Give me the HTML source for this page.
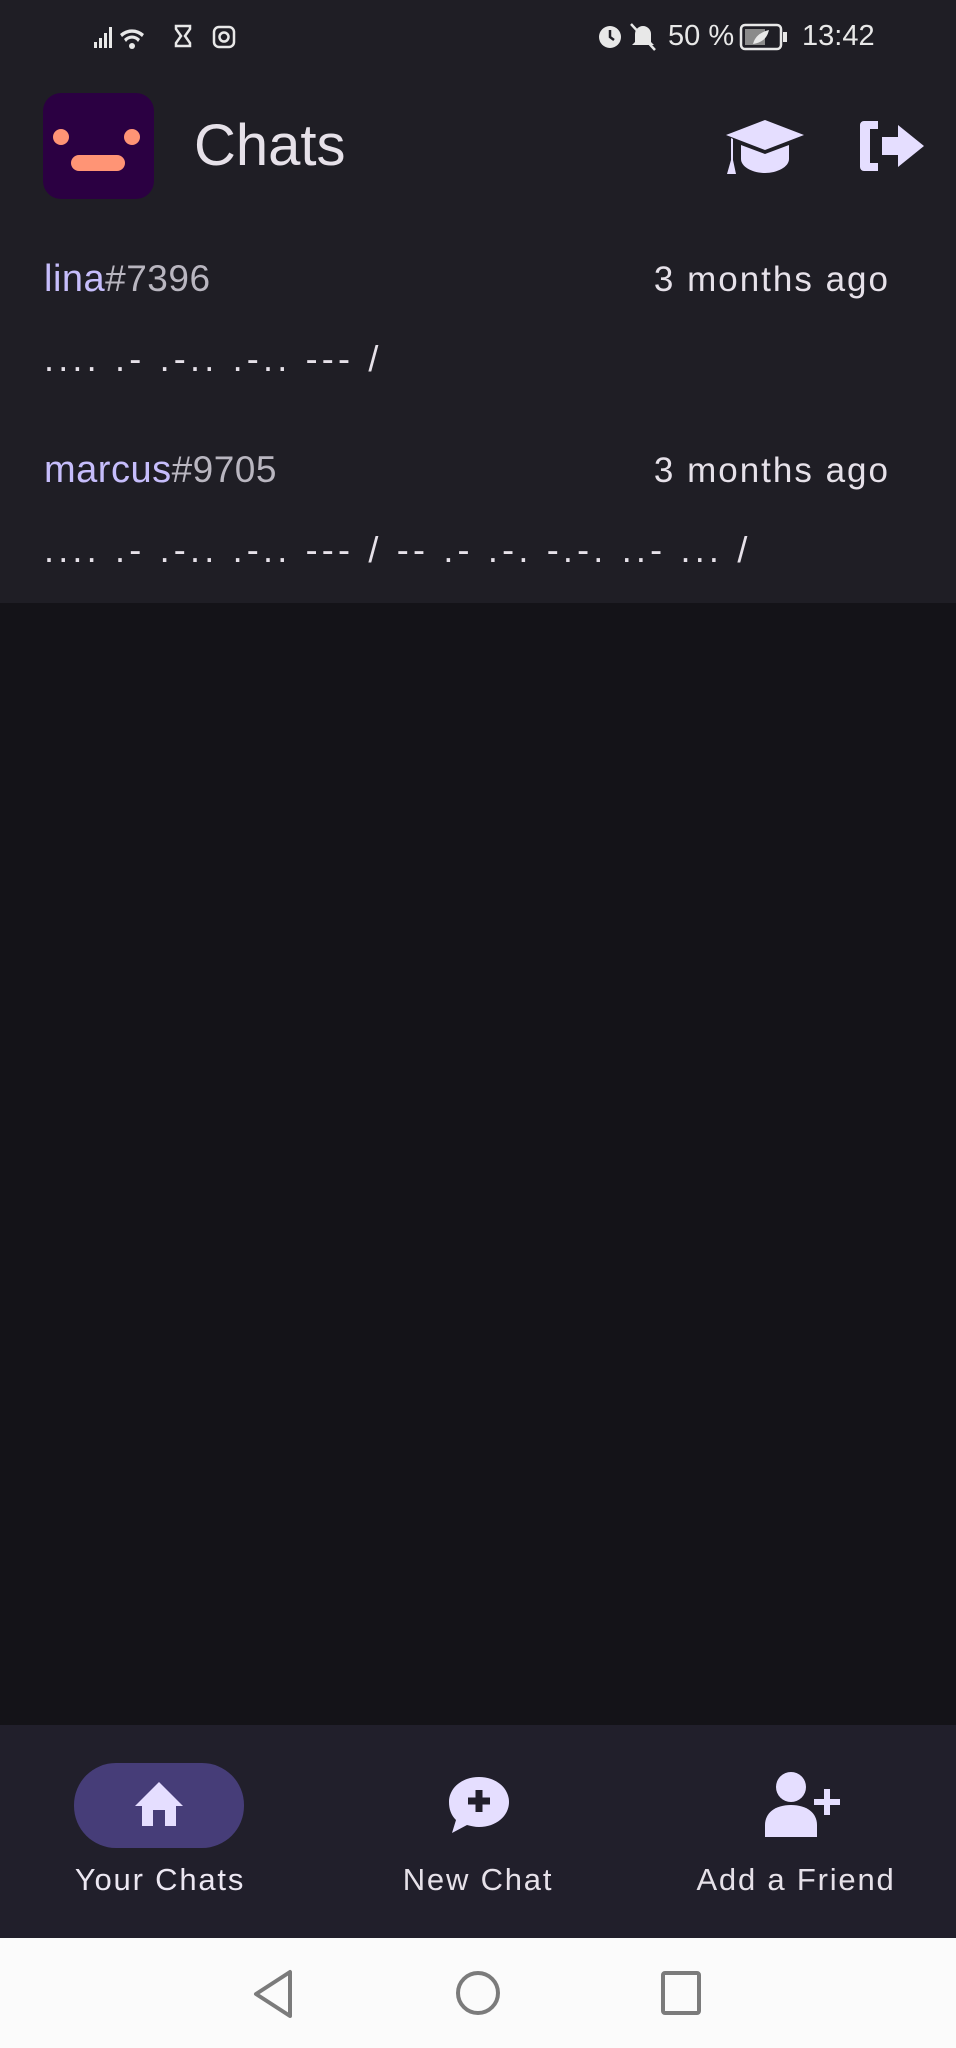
<!DOCTYPE html>
<html><head><meta charset="utf-8"><style>
*{margin:0;padding:0;box-sizing:border-box}
body{width:956px;height:2048px;background:#141318;font-family:"Liberation Sans",sans-serif;position:relative;overflow:hidden;color:#e6e1e9}
.top{position:absolute;left:0;top:0;width:956px;height:603px;background:#1f1e25}
.abs{position:absolute}
.st{font-size:29px;color:#e8e8e8;top:20px}
.name{font-size:38px;left:44px;letter-spacing:0.5px}
.name b{font-weight:normal;color:#c6bdfb}
.name span{color:#b9b6c0;font-size:37px}
.time{font-size:35px;right:66px;color:#e6e1e9;letter-spacing:2px}
.morse{font-size:36px;left:44px;color:#e6e1e9;letter-spacing:4.2px}
.nav{position:absolute;left:0;top:1725px;width:956px;height:213px;background:#211f2b}
.lbl{position:absolute;top:1862px;font-size:31px;color:#e6e1e9;transform:translateX(-50%);white-space:nowrap;letter-spacing:1.8px}
.sys{position:absolute;left:0;top:1938px;width:956px;height:110px;background:#fbfbfb}
</style></head><body>
<div class="top"></div>
<svg class="abs" style="left:92px;top:22px" width="160" height="30" viewBox="0 0 160 30" fill="#e8e8e8">
<rect x="2" y="20" width="3" height="6"/><rect x="7" y="16" width="3" height="10"/><rect x="12" y="11" width="3" height="15"/><rect x="17" y="5" width="3" height="21"/>
<path d="M28 12a18 18 0 0 1 24 0l-2 3a14 14 0 0 0-20 0z M32 17a11 11 0 0 1 16 0l-2 3a7 7 0 0 0-12 0z"/><circle cx="40" cy="24" r="3"/>
<path d="M84 4h14v3l-5 7 5 7v3H84v-3l5-7-5-7z" fill="none" stroke="#e8e8e8" stroke-width="2.5"/>
<rect x="122" y="5" width="20" height="20" rx="5" fill="none" stroke="#e8e8e8" stroke-width="2.5"/><circle cx="132" cy="15" r="4.5" fill="none" stroke="#e8e8e8" stroke-width="2.5"/>
</svg>
<svg class="abs" style="left:595px;top:20px" width="70" height="34" viewBox="0 0 70 34" fill="#e8e8e8">
<circle cx="15" cy="17" r="11"/><path d="M15 10v7l4 3" stroke="#1f1e25" stroke-width="2.5" fill="none"/>
<path d="M48 6a8 8 0 0 1 8 8v8l3 3H37l3-3v-8a8 8 0 0 1 8-8z"/><path d="M36 4l24 26" stroke="#e8e8e8" stroke-width="2.5"/>
</svg>
<div class="abs st" style="left:668px">50 %</div>
<svg class="abs" style="left:739px;top:22px" width="50" height="30" viewBox="0 0 50 30"><rect x="2" y="3" width="40" height="24" rx="4" fill="none" stroke="#e8e8e8" stroke-width="2.5"/><rect x="44" y="10" width="4" height="10" fill="#e8e8e8"/><rect x="6" y="7" width="20" height="16" fill="#8a8a8a"/><path d="M14 22c2-8 8-12 16-14-2 8-6 12-16 14z" fill="#e8e8e8"/></svg>
<div class="abs st" style="left:802px">13:42</div>
<div class="abs" style="left:43px;top:93px;width:111px;height:106px;background:#2b0042;border-radius:18px"></div>
<div class="abs" style="left:53px;top:129px;width:16px;height:16px;border-radius:50%;background:#ff9475"></div>
<div class="abs" style="left:124px;top:129px;width:16px;height:16px;border-radius:50%;background:#ff9475"></div>
<div class="abs" style="left:71px;top:155px;width:54px;height:16px;border-radius:8px;background:#ff9475"></div>
<div class="abs" style="left:194px;top:112px;font-size:58px;color:#e6e1e9;line-height:68px">Chats</div>
<svg class="abs" style="left:724px;top:118px" width="82" height="58" viewBox="0 0 82 58" fill="#e5deff">
<path d="M41 2L80 17 41 32 2 17z"/><path d="M17 27v14c0 8 12 14 24 14s24-6 24-14V27L41 36z"/><path d="M7 20v22l-4 14h9l-3-14V21z"/>
</svg>
<svg class="abs" style="left:858px;top:117px" width="68" height="58" viewBox="0 0 68 58" fill="#e5deff">
<path d="M6 4h14v8H12v34h8v8H6a4 4 0 0 1-4-4V8a4 4 0 0 1 4-4z"/><path d="M24 20h16V8l26 21-26 21V38H24z"/>
</svg>
<div class="abs name" style="top:258px"><b>lina</b><span>#7396</span></div>
<div class="abs time" style="top:260px">3 months ago</div>
<div class="abs morse" style="top:338px">.... .- .-.. .-.. --- /</div>
<div class="abs name" style="top:449px"><b>marcus</b><span>#9705</span></div>
<div class="abs time" style="top:451px">3 months ago</div>
<div class="abs morse" style="top:529px">.... .- .-.. .-.. --- / -- .- .-. -.-. ..- ... /</div>
<div class="nav"></div>
<div class="abs" style="left:74px;top:1763px;width:170px;height:85px;border-radius:42px;background:#463d78"></div>
<svg class="abs" style="left:133px;top:1780px" width="52" height="50" viewBox="0 0 52 50" fill="#e5deff"><path d="M26 2L50 26H43V46H32V30H20V46H9V26H2z"/></svg>
<svg class="abs" style="left:446px;top:1775px" width="66" height="60" viewBox="0 0 66 60"><path d="M33 2c17 0 30 11 30 25S50 52 33 52c-4 0-8-1-12-2L6 58l4-13C5 40 3 34 3 27 3 13 16 2 33 2z" fill="#e5deff"/><path d="M33 15v22M22 26h22" stroke="#211f2b" stroke-width="7"/></svg>
<svg class="abs" style="left:763px;top:1771px" width="86" height="68" viewBox="0 0 86 68" fill="#e5deff"><circle cx="28" cy="16" r="15"/><path d="M2 66V54c0-12 10-20 26-20s26 8 26 20v12z"/><path d="M64 18v26M51 31h26" stroke="#e5deff" stroke-width="6"/></svg>
<div class="lbl" style="left:160px;color:#ece7f2">Your Chats</div>
<div class="lbl" style="left:478px">New Chat</div>
<div class="lbl" style="left:796px">Add a Friend</div>
<div class="sys"></div>
<svg class="abs" style="left:250px;top:1966px" width="460" height="56" viewBox="0 0 460 56" fill="none" stroke="#7b7b7b" stroke-width="4">
<path d="M40 6v44L6 28z" stroke-linejoin="round"/>
<circle cx="228" cy="27" r="20"/>
<rect x="413" y="7" width="36" height="40" rx="2"/>
</svg>
</body></html>
